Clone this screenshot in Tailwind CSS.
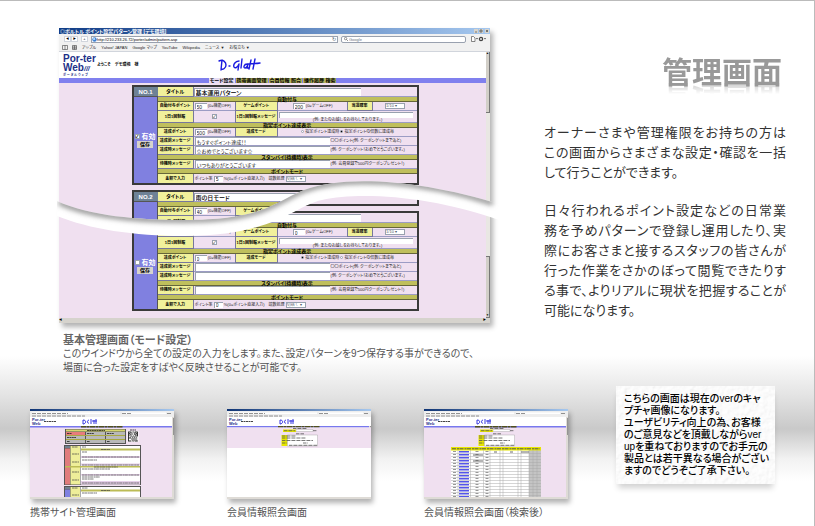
<!DOCTYPE html>
<html lang="ja">

<head>
    <meta charset="UTF-8">
    <meta name="viewport" content="width=device-width, initial-scale=1.0">
    <title>管理画面</title>
    <script src="https://cdn.jsdelivr.net/npm/@tailwindcss/browser@4"></script>
</head>

<body class="bg-white font-['Liberation_Sans','Noto_Sans_CJK_JP',sans-serif] [font-feature-settings:'palt']">
    <main
        class="min-h-screen border-t border-r border-[#bbb] bg-[linear-gradient(to_bottom,#fff_355px,#e3e3e3_395px,#c9c9c9_428px,#f2f2f2_458px,#fff_480px)] bg-no-repeat">

        <!-- Upper part: admin window + description -->
        <div class="grid grid-cols-[minmax(0,431fr)_minmax(0,242fr)] gap-[54px] pt-[27px] pr-[28px] pl-[59px]">
            <section>
                <div class="relative bg-white text-[5px] leading-none text-black shadow-[3px_4px_5px_rgba(0,0,0,0.3)]">
                    <!-- Title bar -->
                    <div
                        class="flex h-[6px] items-center justify-between bg-linear-to-r from-[#0f3c86] to-[#a6c8ef] px-px font-bold text-white">
                        <span>◎ポルトル ポイント設定パターン管理 [デモ環境]</span>
                        <svg class="h-[4px] w-[15px]" viewBox="0 0 15 4">
                            <path d="M0 0h4v4H0zM5 0h4v4H5zM11 0h4v4h-4z" fill="#d8d4cc" />
                            <path d="M1 3h2M6 1h2v2H6zM12 1l2 2M14 1l-2 2" stroke="#333" stroke-width=".6" fill="none" />
                        </svg>
                    </div>
                    <!-- Toolbar -->
                    <div class="flex h-[10px] items-center gap-[3px] bg-[#f1f1f1] pr-[4px] pl-[5px]">
                        <div class="flex">
                            <button class="h-[6px] w-[7px] border border-gray-300 bg-white text-[3px] leading-none">◀</button>
                            <button class="h-[6px] w-[7px] border border-gray-300 bg-white text-[3px] leading-none">▶</button>
                        </div>
                        <button class="h-[6px] w-[7px] border border-gray-300 bg-white text-[4px] leading-none">+</button>
                        <div class="flex h-[7px] flex-1 items-center border border-gray-400 bg-white">
                            <svg class="size-[5px]" viewBox="0 0 6 6">
                                <circle cx="3" cy="3" r="2.7" fill="#3c7fd0" />
                                <path d="M1 2l2-1 1 2-2 1z" fill="#bfe0ff" />
                            </svg>
                            <input aria-label="アドレス" value="http://210.233.26.72/porter/admin/pattern.asp"
                                class="h-[5px] min-w-0 flex-1 text-[4px] leading-none outline-none">
                            <span class="px-px text-gray-600">↻</span>
                        </div>
                        <div class="flex h-[7px] w-[125px] items-center gap-px rounded-[2px] border border-gray-400 bg-white px-[2px]">
                            <svg class="size-[4px]" viewBox="0 0 5 5" fill="none" stroke="#777">
                                <circle cx="2" cy="2" r="1.5" />
                                <path d="M3 3l2 2" />
                            </svg>
                            <input aria-label="検索" placeholder="Google"
                                class="h-[5px] min-w-0 flex-1 text-[4px] leading-none outline-none placeholder:text-gray-500">
                        </div>
                        <svg class="h-[6px] w-[17px]" viewBox="0 0 17 6">
                            <path d="M2.5 .5h2l1.5 1.5v3.500H2.500z" fill="#fff" stroke="#555" stroke-width=".7" />
                            <path d="M7 2h2L8 3.500zM15 2h2l-1 1.500z" fill="#444" />
                            <circle cx="12" cy="3" r="1.600" fill="none" stroke="#444" stroke-width="1.300" />
                        </svg>
                    </div>
                    <!-- Bookmarks -->
                    <nav class="flex h-[8px] items-center gap-[5px] border-b border-gray-300 bg-[#f1f1f1] pl-[3px] text-[4px] text-[#222]">
                        <svg class="h-[5px] w-[15px]" viewBox="0 0 15 5" fill="none" stroke="#444" stroke-width=".6">
                            <path d="M.5 .5h5v4h-5zM3 .5v4M10.500 .5h4v4h-4zM10.500 2h4M10.500 3.200h4M12.500 .5v4" />
                        </svg>
                        <a href="#">アップル</a>
                        <a href="#">Yahoo! JAPAN</a>
                        <a href="#">Google マップ</a>
                        <a href="#">YouTube</a>
                        <a href="#">Wikipedia</a>
                        <a href="#">ニュース ▼</a>
                        <a href="#">お役立ち ▼</a>
                    </nav>
                    <!-- Page -->
                    <div class="flex">
                        <div class="min-w-0 flex-1">
                            <header class="flex h-[26px] items-center pl-[4px]">
                                <div class="w-[31px] text-[10px] leading-[9px] font-bold whitespace-nowrap text-[#1c2f88]">
                                    <p>Por-ter</p>
                                    <p>Web<span class="text-[7px] italic">///</span></p>
                                    <p class="text-[3px] leading-[4px]">ポ ー タ ル ウ ェ ブ</p>
                                </div>
                                <p class="pl-[3px] text-[4px] font-bold">ようこそ　デモ環境　様</p>
                                <svg class="ml-[80px] h-[16px] w-[44px]" viewBox="0 0 44 16" fill="none" stroke="#1a1adf"
                                    stroke-width="1.400" stroke-linecap="round" stroke-linejoin="round">
                                    <path d="M4 3L3 13M1 4C5 2 8 5 8 8S5 13 3 12M11 9h1" />
                                    <path d="M21 4c-4 0-6 4-5 6s4 0 5-3l-1 6M24 2l-1 9M29 7c-3 0-4 4-2 4s3-4 3-4l-1 4h2M33 3l-2 9M37 2l-2 10M29 7c5-1 9 0 13-1" />
                                </svg>
                            </header>
                            <nav class="flex h-[5px] justify-center gap-px bg-[#8080ee] font-bold">
                                <a href="#" class="bg-[#e6dcf4] px-px">モード設定</a>
                                <a href="#" class="bg-[#b6b660] px-px">携帯画面管理</a>
                                <a href="#" class="bg-[#b6b660] px-px">会員情報 照会</a>
                                <a href="#" class="bg-[#b6b660] px-px">操作履歴 検索</a>
                            </nav>
                            <div class="relative h-[235px] overflow-hidden bg-[#f0e0f0]">
                                <div id="upper" class="flex flex-col gap-[5px] pt-[2px]"></div>
                                <!-- Same page scrolled, shown under the wave -->
                                <div id="lower"
                                    class="absolute inset-0 flex flex-col gap-[5px] bg-[#f0e0f0] pt-[23px] [clip-path:polygon(0_126px,9%_137px,21%_144px,33%_143px,44%_136px,49%_128px,56%_116px,61%_111px,68%_107px,80%_109px,92%_115px,100%_125px,100%_100%,0_100%)]">
                                </div>
                            </div>
                        </div>
                        <!-- Scroll bar -->
                        <div class="flex w-[4px] flex-col justify-between bg-[#e9e7e3] text-[3px]">
                            <div class="h-[61px] border-r border-b border-[#777] bg-[#d2cfc8]">▲</div>
                            <div class="flex h-[62px] flex-col justify-end border-t border-r border-b border-[#777] bg-[#d2cfc8]">▼</div>
                        </div>
                    </div>
                    <div class="flex h-[5px] items-center justify-between bg-[#d6d3cd] pr-[4px] text-[3px]">
                        <span>◀</span><span>▶</span>
                    </div>
                    <!-- Wave that cuts the page in two -->
                    <svg class="absolute top-[145px] left-[-2px] h-[70px] w-[calc(100%+14px)]" viewBox="-2 0 445 70"
                        preserveAspectRatio="none">
                        <defs>
                            <clipPath id="band">
                                <path d="M-2 28C30 43 80 47 125 47C205 47 215 29 245 17C285 2 360 6 443 32V48C370 22 300 19 263 27C235 33 215 63 125 63C75 63 30 56-2 43Z" />
                            </clipPath>
                            <filter id="soft" x="-5%" y="-50%" width="110%" height="200%">
                                <feGaussianBlur stdDeviation="2.500" />
                            </filter>
                        </defs>
                        <g clip-path="url(#band)">
                            <path d="M-2 0h445v70H-2z" fill="#fff" />
                            <path d="M0 29C30 43 80 47 125 47C205 47 215 29 245 17C285 2 360 6 434 30" fill="none" stroke="#999"
                                stroke-width="6" filter="url(#soft)" />
                        </g>
                    </svg>
                </div>

                <h2 class="mt-[10px] ml-[4px] text-[11px] leading-[14px] font-bold text-[#666]">基本管理画面（モード設定）</h2>
                <p class="ml-[4px] text-[10px] leading-[14px] whitespace-nowrap text-[#555]">
                    このウインドウから全ての設定の入力をします。また、設定パターンを9つ保存する事ができるので、<br>
                    場面に合った設定をすばやく反映させることが可能です。
                </p>
            </section>

            <section class="pt-[26px] font-['Noto_Sans_CJK_JP',sans-serif] text-[#333]">
                <h1
                    class="mr-[4px] text-right text-[30px] leading-[32px] font-bold text-[#999] [-webkit-box-reflect:below_-3px_linear-gradient(transparent_65%,rgba(0,0,0,0.5))]">
                    管理画面</h1>
                <div class="mt-[36px] flex flex-col gap-[18px] text-[13px] leading-[20px]">
                    <div class="[text-align-last:justify]">
                        <p>オーナーさまや管理権限をお持ちの方は</p>
                        <p>この画面からさまざまな設定・確認を一括</p>
                        <p class="[text-align-last:left]">して行うことができます。</p>
                    </div>
                    <div class="[text-align-last:justify]">
                        <p>日々行われるポイント設定などの日常業</p>
                        <p>務を予めパターンで登録し運用したり、実</p>
                        <p>際にお客さまと接するスタッフの皆さんが</p>
                        <p>行った作業をさかのぼって閲覧できたりす</p>
                        <p>る事で、よりリアルに現状を把握することが</p>
                        <p class="[text-align-last:left]">可能になります。</p>
                    </div>
                </div>
            </section>
        </div>

        <!-- Lower part: thumbnails + note -->
        <div class="grid grid-cols-[minmax(0,538fr)_minmax(0,159fr)] gap-[48px] pt-[11px] pr-[39px] pl-[30px]">
            <div class="grid grid-cols-3 gap-[53px] pt-[23px] text-[10px] leading-[14px] whitespace-nowrap text-[#555]">
                <figure>
                    <svg class="w-full bg-white shadow-[2px_4px_5px_rgba(0,0,0,0.3)]" viewBox="0 0 144 90">
                        <defs>
                            <linearGradient id="bar">
                                <stop stop-color="#0f3474" />
                                <stop offset="1" stop-color="#a6c8ef" />
                            </linearGradient>
                            <!-- Browser frame shared by the three thumbnails -->
                            <g id="frame">
                                <path d="M0 0h144v2H0z" fill="url(#bar)" />
                                <path d="M0 2h144v6H0z" fill="#eee" />
                                <path d="M2 3.500h88v1.500H2zM92 3.500h44v1.500H92z" fill="#fff" />
                                <path d="M2 4.500h36M92 4.500h9M2 7h53M137 4.500h5" stroke="#777" stroke-width=".8" stroke-dasharray="4 1" />
                                <path d="M0 8h144v9H0z" fill="#fff" />
                                <path d="M14 12.500h12" stroke="#444" stroke-dasharray="2 .5" />
                                <path d="M53 11v4M53 11c4 0 3 4 0 4M59 11c-2 0-2 4 0 3M61 10v5M64 11v4M66 10v5M62 12h5" fill="none" stroke="#2323dd" stroke-width=".9" />
                                <text x="2" y="12" font-size="4" font-weight="bold" fill="#1c2f88">Por-ter</text>
                                <text x="2" y="15.500" font-size="4" font-weight="bold" fill="#1c2f88">Web</text>
                                <path d="M0 17h144v1.500H0z" fill="#7878ee" />
                                <path d="M51 17.800h42" stroke="#50501c" stroke-width="1.500" stroke-dasharray="5 .5 3 .5" />
                                <path d="M0 88h144v2H0zM142 8h2v80h-2z" fill="#dedbd6" />
                                <path d="M143.600 9v17" stroke="#777" stroke-width=".8" />
                            </g>
                            <!-- Member search form -->
                            <g id="search">
                                <path d="M56 20.500h13v2.500H56zM54.500 26h6v11h-6z" fill="#e6e600" />
                                <path d="M69 20.500h17v2H69zM60.500 26h30v11h-30z" fill="#fff" stroke="#999" stroke-width=".4" />
                                <path d="M66 19.500h14M57 21.700h11M86 21.700h4M69 24.800h8M55 27h14M55 29h24M55 31.500h31M55 34h5M76 34h5M62 36.300h28" stroke="#555" stroke-width=".8" stroke-dasharray="3 .6 1 .4" />
                            </g>
                        </defs>
                        <path d="M0 18h144v70H0z" fill="#f0e0f0" />
                        <use href="#frame" />
                        <path d="M35 20h61v15H35z" fill="#555" />
                        <path d="M36 20.500h59v2H36z" fill="#d8d870" />
                        <path d="M36 23h19v3H36z" fill="#e87c7c" />
                        <path d="M56 23h19v3H56zM76 23h19v3H76zM36 27h19v3H36zM56 27h19v3H56zM76 27h19v3H76zM36 31h19v3H36zM56 31h19v3H56zM76 31h19v3H76z" fill="#b9b9b9" />
                        <path d="M36 26.500h59M36 30.500h59" stroke="#a8a840" />
                        <path d="M57 21.500h18M37 24.500h5M57 24.500h7M77 24.500h7M37 28.500h9M37 32.500h3M57 32.500h3M77 32.500h3M100 21h6" stroke="#222" stroke-width=".8" stroke-dasharray="2 .4" />
                        <path d="M97.500 22h11v11h-11z" fill="#fff" />
                        <path d="M98 23h10M98 32h10" stroke="#222" stroke-dasharray="3 .6 1 .6 1 .6" />
                        <path d="M98.500 23v9M107.500 23v4M101 23v3M105 23v3M98 26h3M105 26h3M98 29h3" stroke="#222" stroke-width=".9" />
                        <path d="M102 25h3M101 27h7M98 28h9M102 29h6M101 30h6M102 31h6M99 24.500h1.500M106 24.500h1" stroke="#333" stroke-width=".9" stroke-dasharray="1 .7 1.600 .8" />
                        <path d="M34 36h77v40H34zM34 77h77v11H34z" fill="#555" />
                        <path d="M35 37h5v2h-5zM35 78h5v2h-5z" fill="#708090" />
                        <path d="M35 39.500h5v36h-5z" fill="#e07c7c" />
                        <path d="M35 80.500h5V88h-5z" fill="#8080e0" />
                        <path d="M40.500 37H50v38.500h-9.500zM40.500 78H50v10h-9.500z" fill="#eeee99" />
                        <path d="M50.500 37H110v38.500H50.500zM50.500 78H110v10H50.500z" fill="#fff" />
                        <path d="M51 47h59v2H51zM51 54.500h59v2H51zM51 65h59v1.500H51zM51 72h59v3.500H51z" fill="#e5cfe8" />
                        <path d="M51 39.500h59v2H51zM35 57h75v1.500H35zM51 80.500h59v2H51z" fill="#bcbc55" />
                        <path d="M42 38h6M52 38h4M71 40.500h9M42 45h7M52 43h5M52 48h57M42 53h7M52 51h15M52 56h57M64 58h24M52 60h28M42 63h7M52 66h57M52 68h18M52 70h12M42 71h7M52 74h57M42 79h6M52 79h6M71 81.500h9M52 84h15M42 86h7" stroke="#444" stroke-width=".7" stroke-dasharray="2 .3 3 .5" />
                    </svg>
                    <figcaption class="mt-[7px]">携帯サイト管理画面</figcaption>
                </figure>
                <figure>
                    <svg class="w-full bg-white shadow-[2px_4px_5px_rgba(0,0,0,0.3)]" viewBox="0 0 144 90">
                        <use href="#frame" />
                        <path d="M142 8h2v9h-2zM142 18.500h2V88h-2z" fill="#fff" />
                        <path d="M0 18.500h144V39H0z" fill="#f0e0f0" />
                        <use href="#search" />
                    </svg>
                    <figcaption class="mt-[7px]">会員情報照会画面</figcaption>
                </figure>
                <figure>
                    <svg class="w-full bg-white shadow-[2px_4px_5px_rgba(0,0,0,0.3)]" viewBox="0 0 144 90">
                        <path d="M0 18h144v70H0z" fill="#f0e0f0" />
                        <use href="#frame" />
                        <use href="#search" />
                        <path d="M27 41h90v47H27z" fill="#fff" />
                        <path d="M105 41h12v47h-12z" fill="#c4c4c4" />
                        <path d="M27 38h90v3.500H27z" fill="#e6e600" />
                        <path d="M28 39.800h88" stroke="#555" stroke-dasharray="4 1 2 .5" />
                        <path d="M27 44.500h90M27 47.500h90M27 50.500h90M27 53.500h90M27 56.500h90M27 59.500h90M27 62.500h90M27 65.500h90M27 68.500h90M27 71.500h90M27 74.500h90M27 77.500h90M27 80.500h90M27 83.500h90M27 86.500h90" stroke="#aaa" stroke-width=".5" />
                        <path d="M34 41v47M46.500 41v47M59.500 41v47M66 41v47M76 41v47M79 41v47M94 41v47M97 41v47M105 41v47M109 41v47M113 41v47" stroke="#aaa" stroke-width=".5" />
                        <path d="M40 42v46" stroke="#5555e8" stroke-width="10" stroke-dasharray="1.500 1.500" />
                        <path d="M30.500 42v46M53 42v46M63 42v46" stroke="#777" stroke-width="3" stroke-dasharray=".8 2.200" />
                        <path d="M70 43h3M86 43h3M97 43h8M49 46h10M49 52h10" stroke="#444" stroke-width=".8" />
                    </svg>
                    <figcaption class="mt-[7px]">会員情報照会画面（検索後）</figcaption>
                </figure>
            </div>

            <aside class="relative self-start bg-white shadow-[0_6px_6px_-2px_rgba(0,0,0,0.18)]">
                <!-- Rough paper texture -->
                <svg class="absolute inset-0 size-full">
                    <filter id="paper" x="0" y="0" width="100%" height="100%">
                        <feTurbulence type="fractalNoise" baseFrequency=".2" numOctaves="3" />
                        <feDiffuseLighting surfaceScale="1" lighting-color="#fff">
                            <feDistantLight azimuth="225" elevation="68" />
                        </feDiffuseLighting>
                    </filter>
                    <rect width="100%" height="100%" filter="url(#paper)" opacity=".4" />
                </svg>
                <p class="relative py-[7px] pl-[8px] text-[10px] leading-[12px] font-medium whitespace-nowrap text-black">
                    こちらの画面は現在のverのキャ<br>プチャ画像になります。<br>ユーザビリティ向上の為、お客様<br>のご意見などを頂戴しながらver<br>upを重ねておりますのでお手元の<br>製品とは若干異なる場合がござい<br>ますのでどうぞご了承下さい。
                </p>
            </aside>
        </div>
    </main>

    <script>
        const label = "h-[9px] border-r border-b border-[#77779c] bg-[#f1f19b] p-0 text-center text-[4px] font-bold";
        const value = "h-[9px] border-b border-[#9c9cc4] p-0 pl-px text-[4px] text-[#222]";
        const section = "h-[5px] border-b border-[#66663a] bg-[#bfbf5c] p-0 text-center leading-[4px] font-bold";
        const box = "border-t border-l border-gray-400 bg-white px-px text-[5px] leading-none align-middle";
        const tick = "size-[5px] appearance-none border border-gray-400 bg-white align-middle text-[4px] leading-[3px] text-black checked:before:block checked:before:content-['✓']";
        const dot = "size-[3px] appearance-none rounded-full border border-gray-400 bg-white align-middle checked:bg-black";
        const list = "h-[6px] w-[20px] appearance-none border border-gray-400 bg-white text-[4px] leading-none align-middle text-gray-600";

        // One pattern block of the settings page
        function pattern(id, p) {
            return `
            <table class="ml-[17%] w-[67%] table-fixed border-separate border-spacing-0 border-2 border-[#3a3a3a] bg-[#f0e0f0] whitespace-nowrap">
                <colgroup>
                    <col class="w-[24px]"><col class="w-[36px]"><col class="w-[41px]"><col class="w-[43px]">
                    <col class="w-[52px]"><col class="w-[17px]"><col class="w-[26px]"><col class="w-[44px]">
                </colgroup>
                <tr>
                    <th class="h-[10px] border-b border-[#555] bg-[#6e8296] p-0 text-[6px] text-white">NO.${p.no}</th>
                    <th class="h-[10px] border-r border-b border-[#77779c] bg-[#f1f19b] p-0"><label for="${id}t">タイトル</label></th>
                    <td class="h-[10px] border-b border-[#9c9cc4] p-0" colspan="6"><input id="${id}t" value="${p.title}" class="h-[8px] w-[75%] border-t border-l border-gray-400 bg-white px-px align-top text-[6px] leading-none font-medium"></td>
                </tr>
                <tr>
                    <td rowspan="11" class="border-r border-[#555] bg-[#8080e0] p-0 text-center font-bold text-white">
                        <label class="text-[7px] leading-[8px]"><input type="checkbox" class="${tick}" ${p.on ? "checked" : ""}> 有効</label><br>
                        <button class="h-[7px] w-[16px] bg-[#d6d3cd] text-[5px] leading-none font-bold text-black">保存</button>
                    </td>
                    <th class="${section}" colspan="7">自動付与</th>
                </tr>
                <tr>
                    <th class="${label}"><label for="${id}a">自動付与ポイント</label></th>
                    <td class="${value}"><input id="${id}a" value="${p.auto}" class="${box} h-[6px] w-[12px]"> (0=機能OFF)</td>
                    <th class="${label} border-l"><label for="${id}g">ゲームポイント</label></th>
                    <td class="${value} text-center" colspan="2"><input id="${id}g" value="${p.game}" class="${box} h-[6px] w-[12px]"> (0=ゲームOFF)</td>
                    <th class="${label} border-l"><label for="${id}r">当選確率</label></th>
                    <td class="${value} text-center"><select id="${id}r" class="${list}"><option>1/10 ▾</option></select></td>
                </tr>
                <tr>
                    <th class="${label} h-[12px]"><label for="${id}d">1日1回制服</label></th>
                    <td class="${value} text-center"><input id="${id}d" type="checkbox" class="${tick}" checked></td>
                    <th class="${label} border-l"><label for="${id}dm">1日1回制服メッセージ</label></th>
                    <td class="${value} text-center" colspan="4"><input id="${id}dm" class="block h-[6px] w-[134px] border-t border-l border-gray-400 bg-white">(例: またのお越しをお待ちしております。)</td>
                </tr>
                <tr><th class="${section}" colspan="7">指定ポイント達成表示</th></tr>
                <tr>
                    <th class="${label}"><label for="${id}p">達成ポイント</label></th>
                    <td class="${value}"><input id="${id}p" value="${p.point}" class="${box} h-[6px] w-[12px]"> (0=機能OFF)</td>
                    <th class="${label} border-l">達成モード</th>
                    <td class="${value} text-center" colspan="4">
                        <label><input type="radio" name="${id}m" class="${dot}" ${p.every ? "" : "checked"}> 指定ポイント達成時</label>
                        <label><input type="radio" name="${id}m" class="${dot}" ${p.every ? "checked" : ""}> 指定ポイントの倍数に達成毎</label>
                    </td>
                </tr>
                <tr>
                    <th class="${label}"><label for="${id}b">達成前メッセージ</label></th>
                    <td class="${value} pl-0" colspan="3"><input id="${id}b" value="${p.before}" class="${box} block h-[8px] w-full"></td>
                    <td class="${value}" colspan="3">〇〇ポイント(例: クーポンゲットまであと)</td>
                </tr>
                <tr>
                    <th class="${label}"><label for="${id}h">達成時メッセージ</label></th>
                    <td class="${value} pl-0" colspan="3"><input id="${id}h" value="${p.hit}" class="${box} block h-[8px] w-full"></td>
                    <td class="${value}" colspan="3">(例: クーポンゲット！おめでとうございます。)</td>
                </tr>
                <tr><th class="${section}" colspan="7">スタンバイ(待機時)表示</th></tr>
                <tr>
                    <th class="${label}"><label for="${id}w">待機時メッセージ</label></th>
                    <td class="${value} pl-0" colspan="3"><input id="${id}w" value="${p.wait}" class="${box} block h-[8px] w-full"></td>
                    <td class="${value}" colspan="3">(例: 会員登録で500円クーポンプレゼント！)</td>
                </tr>
                <tr><th class="${section}" colspan="7">ポイントモード</th></tr>
                <tr>
                    <th class="${label} border-b-0"><label for="${id}k">金額で入力</label></th>
                    <td class="${value} border-b-0" colspan="6">ポイント率 <input id="${id}k" value="${p.rate}" class="${box} h-[6px] w-[9px]"> %(0=ポイント直接入力)　<label>端数処理 <select class="${list}"><option>切捨て ▾</option></select></label></td>
                </tr>
            </table>`;
        }

        const basic = { no: 1, title: "基本運用パターン", on: true, auto: 50, game: 200, point: 500, every: true, before: "もうすぐポイント達成！！", hit: "☆おめでとうございます☆", wait: "いつもありがとうございます", rate: 5 };
        const rain = { no: 2, title: "雨の日モード", on: true, auto: 40, game: 0, point: 0, every: false, before: "", hit: "", wait: "", rate: 0 };
        const blank = { no: 3, title: "", on: false, auto: 0, game: 0, point: 0, every: false, before: "", hit: "", wait: "", rate: 0 };

        document.getElementById("upper").innerHTML = pattern("u1", basic) + pattern("u2", rain);
        document.getElementById("lower").innerHTML = pattern("l1", basic) + pattern("l2", blank);
    </script>
</body>

</html>
